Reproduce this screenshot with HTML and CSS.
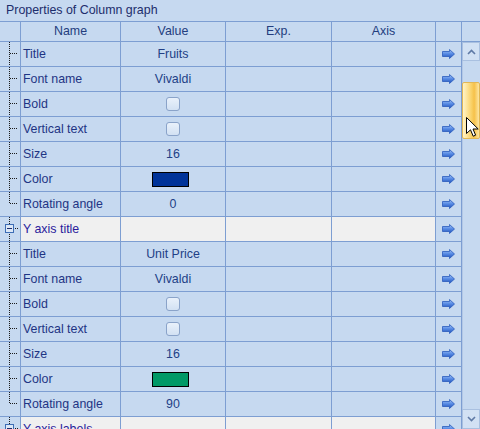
FILE: index.html
```html
<!DOCTYPE html>
<html>
<head>
<meta charset="utf-8">
<link rel="stylesheet" href="styles.css">
</head>
<body>
<div class="window">
  <div class="titlebar">Properties of Column graph</div>
  <div class="header">
    <div class="hcell"></div>
    <div class="hcell">Name</div>
    <div class="hcell">Value</div>
    <div class="hcell">Exp.</div>
    <div class="hcell">Axis</div>
    <div class="hcell"></div>
    <div class="hcell"></div>
  </div>
  <div class="body">
    <div class="rows">
      <!-- group 1 children -->
      <div class="row">
        <div class="cell tree"><svg class="tv" width="20" height="24"><line x1="9.5" y1="0" x2="9.5" y2="24"/><line x1="10" y1="11.5" x2="18" y2="11.5"/></svg></div>
        <div class="cell name">Title</div><div class="cell val">Fruits</div><div class="cell"></div><div class="cell"></div>
        <div class="cell arr"><svg class="arrow" width="14" height="10" viewBox="0 0 14 10"><use href="#ar"/></svg></div>
      </div>
      <div class="row">
        <div class="cell tree"><svg class="tv" width="20" height="24"><line x1="9.5" y1="0" x2="9.5" y2="24"/><line x1="10" y1="11.5" x2="18" y2="11.5"/></svg></div>
        <div class="cell name">Font name</div><div class="cell val">Vivaldi</div><div class="cell"></div><div class="cell"></div>
        <div class="cell arr"><svg class="arrow" width="14" height="10" viewBox="0 0 14 10"><use href="#ar"/></svg></div>
      </div>
      <div class="row">
        <div class="cell tree"><svg class="tv" width="20" height="24"><line x1="9.5" y1="0" x2="9.5" y2="24"/><line x1="10" y1="11.5" x2="18" y2="11.5"/></svg></div>
        <div class="cell name">Bold</div><div class="cell val"><span class="check"></span></div><div class="cell"></div><div class="cell"></div>
        <div class="cell arr"><svg class="arrow" width="14" height="10" viewBox="0 0 14 10"><use href="#ar"/></svg></div>
      </div>
      <div class="row">
        <div class="cell tree"><svg class="tv" width="20" height="24"><line x1="9.5" y1="0" x2="9.5" y2="24"/><line x1="10" y1="11.5" x2="18" y2="11.5"/></svg></div>
        <div class="cell name">Vertical text</div><div class="cell val"><span class="check"></span></div><div class="cell"></div><div class="cell"></div>
        <div class="cell arr"><svg class="arrow" width="14" height="10" viewBox="0 0 14 10"><use href="#ar"/></svg></div>
      </div>
      <div class="row">
        <div class="cell tree"><svg class="tv" width="20" height="24"><line x1="9.5" y1="0" x2="9.5" y2="24"/><line x1="10" y1="11.5" x2="18" y2="11.5"/></svg></div>
        <div class="cell name">Size</div><div class="cell val">16</div><div class="cell"></div><div class="cell"></div>
        <div class="cell arr"><svg class="arrow" width="14" height="10" viewBox="0 0 14 10"><use href="#ar"/></svg></div>
      </div>
      <div class="row">
        <div class="cell tree"><svg class="tv" width="20" height="24"><line x1="9.5" y1="0" x2="9.5" y2="24"/><line x1="10" y1="11.5" x2="18" y2="11.5"/></svg></div>
        <div class="cell name">Color</div><div class="cell val"><span class="swatch blue"></span></div><div class="cell"></div><div class="cell"></div>
        <div class="cell arr"><svg class="arrow" width="14" height="10" viewBox="0 0 14 10"><use href="#ar"/></svg></div>
      </div>
      <div class="row">
        <div class="cell tree"><svg class="tv" width="20" height="24"><line x1="9.5" y1="0" x2="9.5" y2="12"/><line x1="10" y1="11.5" x2="18" y2="11.5"/></svg></div>
        <div class="cell name">Rotating angle</div><div class="cell val">0</div><div class="cell"></div><div class="cell"></div>
        <div class="cell arr"><svg class="arrow" width="14" height="10" viewBox="0 0 14 10"><use href="#ar"/></svg></div>
      </div>
      <!-- group 2 parent -->
      <div class="row parent">
        <div class="cell tree"><svg class="tv" width="20" height="24"><line x1="9.5" y1="0" x2="9.5" y2="7"/><line x1="9.5" y1="17" x2="9.5" y2="24"/><line x1="15" y1="11.5" x2="19" y2="11.5"/><rect class="box" x="5.5" y="7.5" width="8" height="8"/><line class="minus" x1="7" y1="11.5" x2="12" y2="11.5"/></svg></div>
        <div class="cell name hl">Y axis title</div><div class="cell hl"></div><div class="cell hl"></div><div class="cell hl"></div>
        <div class="cell arr"><svg class="arrow" width="14" height="10" viewBox="0 0 14 10"><use href="#ar"/></svg></div>
      </div>
      <!-- group 2 children -->
      <div class="row">
        <div class="cell tree"><svg class="tv" width="20" height="24"><line x1="9.5" y1="0" x2="9.5" y2="24"/><line x1="10" y1="11.5" x2="18" y2="11.5"/></svg></div>
        <div class="cell name">Title</div><div class="cell val">Unit Price</div><div class="cell"></div><div class="cell"></div>
        <div class="cell arr"><svg class="arrow" width="14" height="10" viewBox="0 0 14 10"><use href="#ar"/></svg></div>
      </div>
      <div class="row">
        <div class="cell tree"><svg class="tv" width="20" height="24"><line x1="9.5" y1="0" x2="9.5" y2="24"/><line x1="10" y1="11.5" x2="18" y2="11.5"/></svg></div>
        <div class="cell name">Font name</div><div class="cell val">Vivaldi</div><div class="cell"></div><div class="cell"></div>
        <div class="cell arr"><svg class="arrow" width="14" height="10" viewBox="0 0 14 10"><use href="#ar"/></svg></div>
      </div>
      <div class="row">
        <div class="cell tree"><svg class="tv" width="20" height="24"><line x1="9.5" y1="0" x2="9.5" y2="24"/><line x1="10" y1="11.5" x2="18" y2="11.5"/></svg></div>
        <div class="cell name">Bold</div><div class="cell val"><span class="check"></span></div><div class="cell"></div><div class="cell"></div>
        <div class="cell arr"><svg class="arrow" width="14" height="10" viewBox="0 0 14 10"><use href="#ar"/></svg></div>
      </div>
      <div class="row">
        <div class="cell tree"><svg class="tv" width="20" height="24"><line x1="9.5" y1="0" x2="9.5" y2="24"/><line x1="10" y1="11.5" x2="18" y2="11.5"/></svg></div>
        <div class="cell name">Vertical text</div><div class="cell val"><span class="check"></span></div><div class="cell"></div><div class="cell"></div>
        <div class="cell arr"><svg class="arrow" width="14" height="10" viewBox="0 0 14 10"><use href="#ar"/></svg></div>
      </div>
      <div class="row">
        <div class="cell tree"><svg class="tv" width="20" height="24"><line x1="9.5" y1="0" x2="9.5" y2="24"/><line x1="10" y1="11.5" x2="18" y2="11.5"/></svg></div>
        <div class="cell name">Size</div><div class="cell val">16</div><div class="cell"></div><div class="cell"></div>
        <div class="cell arr"><svg class="arrow" width="14" height="10" viewBox="0 0 14 10"><use href="#ar"/></svg></div>
      </div>
      <div class="row">
        <div class="cell tree"><svg class="tv" width="20" height="24"><line x1="9.5" y1="0" x2="9.5" y2="24"/><line x1="10" y1="11.5" x2="18" y2="11.5"/></svg></div>
        <div class="cell name">Color</div><div class="cell val"><span class="swatch green"></span></div><div class="cell"></div><div class="cell"></div>
        <div class="cell arr"><svg class="arrow" width="14" height="10" viewBox="0 0 14 10"><use href="#ar"/></svg></div>
      </div>
      <div class="row">
        <div class="cell tree"><svg class="tv" width="20" height="24"><line x1="9.5" y1="0" x2="9.5" y2="12"/><line x1="10" y1="11.5" x2="18" y2="11.5"/></svg></div>
        <div class="cell name">Rotating angle</div><div class="cell val">90</div><div class="cell"></div><div class="cell"></div>
        <div class="cell arr"><svg class="arrow" width="14" height="10" viewBox="0 0 14 10"><use href="#ar"/></svg></div>
      </div>
      <!-- group 3 parent (partial) -->
      <div class="row parent">
        <div class="cell tree"><svg class="tv" width="20" height="24"><line x1="9.5" y1="0" x2="9.5" y2="7"/><line x1="9.5" y1="17" x2="9.5" y2="24"/><line x1="15" y1="11.5" x2="19" y2="11.5"/><rect class="box" x="5.5" y="7.5" width="8" height="8"/><line class="minus" x1="7" y1="11.5" x2="12" y2="11.5"/></svg></div>
        <div class="cell name hl">Y axis labels</div><div class="cell hl"></div><div class="cell hl"></div><div class="cell hl"></div>
        <div class="cell arr"><svg class="arrow" width="14" height="10" viewBox="0 0 14 10"><use href="#ar"/></svg></div>
      </div>
    </div>
    <div class="scroll">
      <div class="sbtn"><svg width="9" height="6" viewBox="0 0 9 6"><polyline points="1,5 4.5,1.5 8,5" class="chev"/></svg></div>
      <div class="track"><div class="thumb"></div></div>
      <div class="sbtn down"><svg width="9" height="6" viewBox="0 0 9 6"><polyline points="1,1 4.5,4.5 8,1" class="chev"/></svg></div>
    </div>
  </div>
  <svg class="cursor" width="13" height="21" viewBox="0 0 13 21"><path d="M0.5 0.5 L0.5 16.5 L4.5 12.8 L7.2 19.2 L9.6 18.2 L7 12 L12.2 12 Z" fill="#fff" stroke="#000" stroke-width="1" stroke-linejoin="miter"/></svg>
  <svg width="0" height="0" class="defs">
    <defs>
      <linearGradient id="ag" x1="0" y1="0" x2="0" y2="1">
        <stop offset="0" stop-color="#a9c8f5"/>
        <stop offset="0.45" stop-color="#5b8ee6"/>
        <stop offset="1" stop-color="#1d4fb8"/>
      </linearGradient>
      <symbol id="ar" viewBox="0 0 14 10">
        <path d="M0.5 2.5 L7.5 2.5 L7.5 0.5 L12.5 5 L7.5 9.5 L7.5 7.5 L0.5 7.5 Z" fill="url(#ag)" stroke="#2a5bbd" stroke-width="0.8"/>
      </symbol>
    </defs>
  </svg>
</div>
</body>
</html>
```

FILE: styles.css
```css
* { box-sizing: border-box; }
html, body { margin: 0; padding: 0; }
body {
  width: 480px;
  height: 429px;
  overflow: hidden;
  font-family: "Liberation Sans", Arial, sans-serif;
  font-size: 12.4px;
  color: #1f3584;
  background: #c6d9f0;
}
.window {
  position: relative;
  width: 480px;
  height: 429px;
  overflow: hidden;
  background: #c6d9f0;
}
.titlebar {
  height: 21px;
  line-height: 21px;
  padding-left: 6px;
  color: #1d2d6c;
}
.header {
  display: grid;
  grid-template-columns: 20px 99px 104px 105px 103px 25px 18px;
  column-gap: 1px;
  background: #7d9ed2;
  border-top: 1px solid #7d9ed2;
  border-bottom: 1px solid #7d9ed2;
  height: 21px;
}
.hcell {
  background: #c6d9f0;
  text-align: center;
  line-height: 19px;
  color: #233d7e;
}
.body {
  display: flex;
  height: 387px;
  overflow: hidden;
}
.rows {
  width: 462px;
  border-right: 1px solid #7d9ed2;
  overflow: hidden;
}
.row {
  display: grid;
  grid-template-columns: 20px 99px 104px 105px 103px 25px;
  column-gap: 1px;
  background: #7d9ed2;
  border-bottom: 1px solid #7d9ed2;
  height: 25px;
}
.cell {
  background: #c6d9f0;
  height: 24px;
  display: flex;
  align-items: center;
}
.cell.name {
  padding-left: 2px;
  color: #1f3584;
}
.cell.hl { background: #f0f0f0; }
.row.parent .name { color: #2a1c9c; }
.cell.val {
  justify-content: center;
  color: #223f86;
}
.cell.arr { justify-content: center; }
.arrow { display: block; margin-left: 1px; }
.tv { display: block; }
.tv line {
  stroke: #1a1a1a;
  stroke-width: 1;
  stroke-dasharray: 1 1;
  shape-rendering: crispEdges;
}
.tv .box {
  fill: #dbe7f6;
  stroke: #3d6db5;
  stroke-width: 1;
  shape-rendering: crispEdges;
}
.tv line.minus {
  stroke: #1c2d6e;
  stroke-dasharray: none;
}
.check {
  display: block;
  width: 14px;
  height: 14px;
  border: 1px solid #8aa3c9;
  border-radius: 3px;
  background: linear-gradient(#e9f1fb, #d2e1f3);
}
.swatch {
  display: block;
  width: 37px;
  height: 15px;
  margin-right: 6px;
  border: 1px solid #000;
}
.swatch.blue { background: #003399; }
.swatch.green { background: #009966; }
.scroll {
  width: 18px;
  display: flex;
  flex-direction: column;
  background: #c6d9f0;
}
.sbtn {
  height: 19px;
  border: 1px solid #a9c0e0;
  background: #d2e1f4;
  display: flex;
  align-items: center;
  justify-content: center;
}
.sbtn.down { height: 20px; }
.chev {
  fill: none;
  stroke: #5f7aa6;
  stroke-width: 1.6;
}
.track {
  flex: 1;
  background: #c6d9f0;
  border-left: 1px solid #b3c8e6;
}
.thumb {
  margin-top: 21px;
  margin-left: -1px;
  height: 57px;
  width: 18px;
  border: 1px solid #e2b755;
  border-radius: 2px;
  background: linear-gradient(to right, #fff3c8 0%, #fde49a 25%, #f9cf63 55%, #f6c14a 70%, #fde6a2 100%);
}
.cursor {
  position: absolute;
  left: 466px;
  top: 117px;
}
.defs { position: absolute; left: 0; top: 0; }
```
